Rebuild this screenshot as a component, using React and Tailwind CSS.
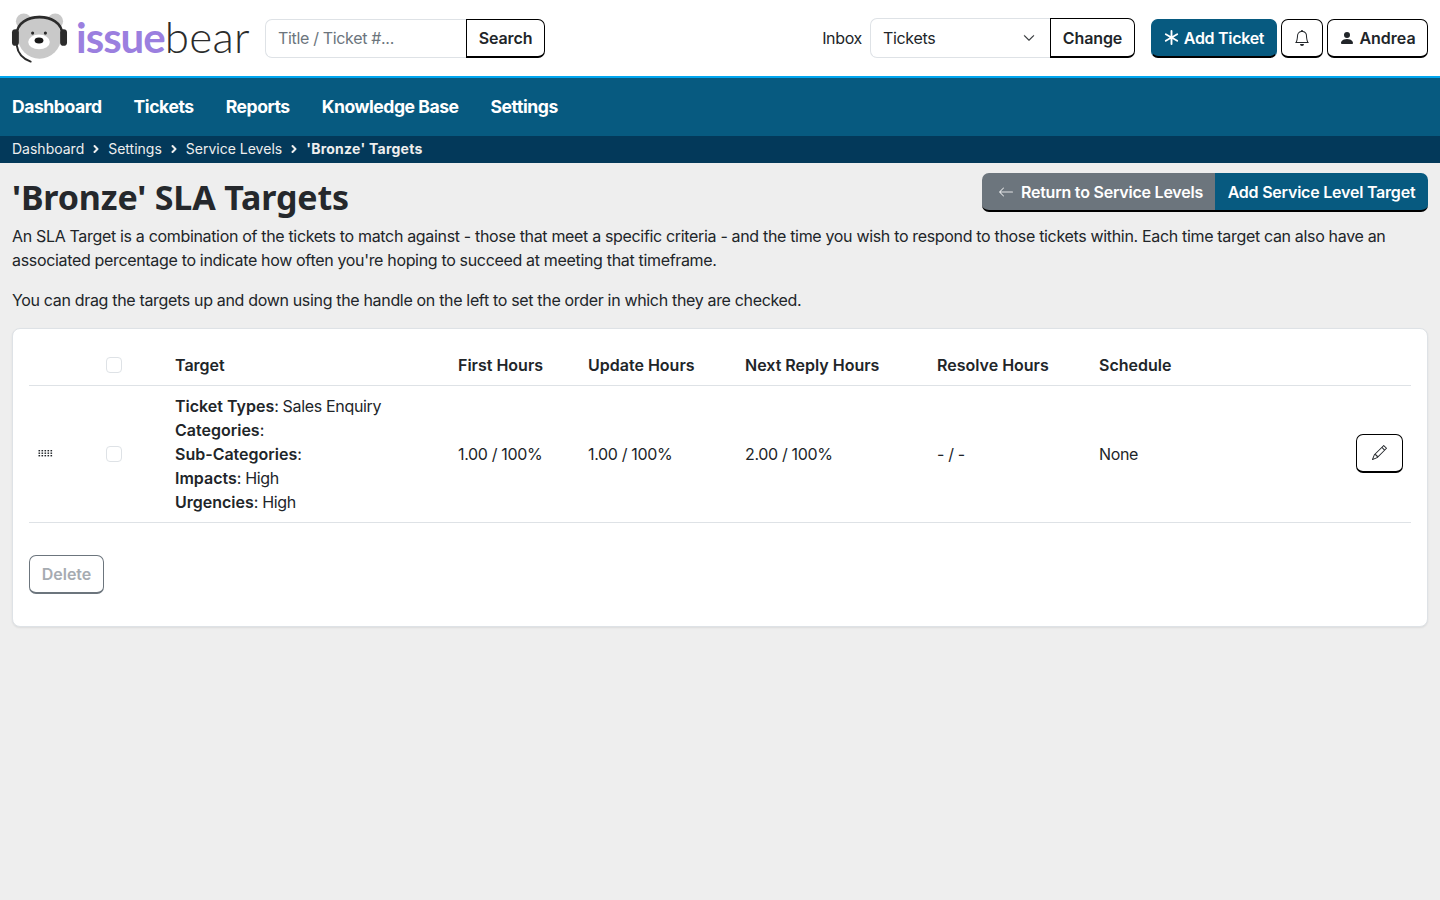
import { BsArrowLeft, BsAsterisk, BsBell, BsChevronDown, BsChevronRight, BsPencil, BsPersonFill } from 'react-icons/bs';

function BearLogo() {
  return (
    <svg width="57" height="52" viewBox="0 0 58 52" className="shrink-0 -ml-[1px]">
      <circle cx="13" cy="9" r="8" fill="#c9c9c9" />
      <circle cx="45" cy="9" r="8" fill="#c9c9c9" />
      <circle cx="29" cy="25" r="22" fill="#c9c9c9" />
      <path d="M6 22 C6 -1 52 -1 52 22" fill="none" stroke="#2b2b2b" strokeWidth="2.6" />
      <rect x="1" y="17" width="7" height="17" rx="3.5" fill="#2b2b2b" />
      <rect x="50" y="17" width="7" height="17" rx="3.5" fill="#2b2b2b" />
      <path d="M6 34 C7 42 12 47 20 50" fill="none" stroke="#2b2b2b" strokeWidth="2" strokeLinecap="round" />
      <ellipse cx="28.5" cy="30" rx="11" ry="7.5" fill="#fff" />
      <ellipse cx="28.5" cy="28.5" rx="4.5" ry="3" fill="#1a1a1a" />
      <circle cx="22" cy="21" r="1.6" fill="#2b2b2b" />
      <circle cx="35" cy="21" r="1.6" fill="#2b2b2b" />
    </svg>
  );
}

function GripDots() {
  const dots = [];
  for (let row = 0; row < 3; row++) {
    for (let col = 0; col < 5; col++) {
      dots.push(<rect key={`${row}-${col}`} x={col * 3} y={row * 2.5} width="1.6" height="1.4" fill="#212529" />);
    }
  }
  return (
    <svg width="15" height="7" viewBox="0 0 14 7" className="-mt-[1px] ml-[1px]">
      {dots}
    </svg>
  );
}

function Crumb({ children }) {
  return (
    <>
      <span>{children}</span>
      <BsChevronRight className="w-[8px] h-[8px] mx-[8px] stroke-[3px] stroke-current" />
    </>
  );
}

const outlineBtn = 'flex items-center justify-center bg-white border border-black border-b-2 rounded-[7px] text-[#212529] font-semibold tracking-normal';

export default function App() {
  return (
    <div className="min-h-[900px] bg-[#eeeeee] text-[#212529] text-[16px] leading-[24px] tracking-[-0.33px] font-['Inter',sans-serif]">
      {/* Top bar */}
      <header className="h-[78px] bg-white border-b-2 border-[#00a6f0] flex items-center px-[12px]">
        <div className="flex items-center w-[253px] shrink-0">
          <BearLogo />
          <span className="ml-[8px] text-[44px] leading-[52px] font-['Lato',sans-serif] font-light tracking-[0.3px] text-[#2b2b2b] -mt-[3px]">
            <span className="text-[42px] font-bold tracking-[-1px] text-[#9b7fdf]">issue</span>bear
          </span>
        </div>
        <div className="flex h-[39px]">
          <div className="w-[201px] bg-white border border-[#dee2e6] border-r-0 rounded-l-[7px] px-[12px] flex items-center text-[#6c757d]">
            Title / Ticket #...
          </div>
          <button className="w-[79px] bg-white border border-black border-b-2 rounded-r-[7px] font-semibold tracking-[-0.1px]">Search</button>
        </div>

        <div className="ml-auto flex items-center">
          <span className="mr-[8px]">Inbox</span>
          <div className="flex h-[40px]">
            <div className="w-[180px] bg-white border border-[#dee2e6] border-r-0 rounded-l-[7px] pl-[12px] pr-[15px] flex items-center justify-between">
              Tickets
              <BsChevronDown className="w-[12px] h-[12px] stroke-[0.6px] stroke-current" />
            </div>
            <button className="w-[85px] bg-white border border-black border-b-2 rounded-r-[7px] font-semibold tracking-[-0.1px]">Change</button>
          </div>
          <button className="ml-[16px] w-[126px] h-[39px] flex items-center justify-center bg-[#075a80] text-white border border-[#075a80] border-b-2 border-b-black rounded-[7px] font-semibold tracking-[-0.3px]">
            <BsAsterisk className="w-[15px] h-[15px] mr-[5px]" />
            Add Ticket
          </button>
          <button className={`${outlineBtn} ml-[4px] w-[42px] h-[39px]`}>
            <BsBell className="w-[16px] h-[16px]" />
          </button>
          <button className={`${outlineBtn} ml-[4px] w-[101px] h-[39px]`}>
            <BsPersonFill className="w-[16px] h-[16px] mr-[4px]" />
            Andrea
          </button>
        </div>
      </header>

      {/* Main nav */}
      <nav className="h-[58px] bg-[#075a80] flex items-center px-[12px] gap-[32px] text-white text-[17.6px] font-bold tracking-[-0.47px]">
        <span>Dashboard</span>
        <span>Tickets</span>
        <span>Reports</span>
        <span>Knowledge Base</span>
        <span>Settings</span>
      </nav>

      {/* Breadcrumb */}
      <div className="h-[27px] bg-[#03395a] flex items-center px-[12px] pb-[2px] text-[14px] tracking-normal text-[#eeeeee]">
        <Crumb>Dashboard</Crumb>
        <Crumb>Settings</Crumb>
        <Crumb>Service Levels</Crumb>
        <span className="font-bold tracking-[0.25px]">'Bronze' Targets</span>
      </div>

      <main className="px-[12px] pt-[10px]">
        <div className="flex justify-between h-[51px]">
          <h1 className="text-[34px] leading-[50px] font-bold font-['Noto_Sans',sans-serif] tracking-[-0.15px] text-[#25282c] -mt-[1px]">'Bronze' SLA Targets</h1>
          <div className="flex h-[39px] text-white font-semibold tracking-[-0.22px]">
            <button className="w-[233px] flex items-center justify-end pr-[12px] bg-[#6c757d] border-b-2 border-black rounded-l-[7px]">
              <BsArrowLeft className="w-[16px] h-[16px] mr-[7px] opacity-80" />
              Return to Service Levels
            </button>
            <button className="w-[213px] bg-[#075a80] border-b-2 border-black rounded-r-[7px]">Add Service Level Target</button>
          </div>
        </div>

        <p>
          An SLA Target is a combination of the tickets to match against - those that meet a specific criteria - and the time you wish to respond to those tickets within. Each time target can also have an associated percentage to indicate how often you're hoping to succeed at meeting that timeframe.
        </p>
        <p className="mt-[16px]">You can drag the targets up and down using the handle on the left to set the order in which they are checked.</p>

        <section className="mt-[16px] bg-white border border-[#dee2e6] rounded-[8px] shadow-[0_1px_2px_rgba(0,0,0,0.08)] p-[16px]">
          <table className="w-full table-fixed border-collapse">
            <colgroup>
              <col className="w-[69px]" />
              <col className="w-[69px]" />
              <col className="w-[283px]" />
              <col className="w-[130px]" />
              <col className="w-[157px]" />
              <col className="w-[192px]" />
              <col className="w-[162px]" />
              <col />
              <col className="w-[63px]" />
            </colgroup>
            <thead>
              <tr className="border-b border-[#dee2e6] text-left tracking-normal">
                <th className="p-[8px]"></th>
                <th className="p-[8px]">
                  <div className="w-[16px] h-[16px] border border-[#dee2e6] rounded-[4px] bg-white"></div>
                </th>
                <th className="p-[8px] font-semibold">Target</th>
                <th className="p-[8px] font-semibold">First Hours</th>
                <th className="p-[8px] font-semibold">Update Hours</th>
                <th className="p-[8px] font-semibold">Next Reply Hours</th>
                <th className="p-[8px] font-semibold">Resolve Hours</th>
                <th className="p-[8px] font-semibold">Schedule</th>
                <th className="p-[8px]"></th>
              </tr>
            </thead>
            <tbody>
              <tr className="border-b border-[#dee2e6]">
                <td className="p-[8px]">
                  <div className="flex"><GripDots /></div>
                </td>
                <td className="p-[8px]">
                  <div className="w-[16px] h-[16px] border border-[#dee2e6] rounded-[4px] bg-white"></div>
                </td>
                <td className="p-[8px] whitespace-nowrap">
                  <div><b className="font-semibold tracking-normal">Ticket Types</b>: Sales Enquiry</div>
                  <div><b className="font-semibold tracking-normal">Categories</b>:</div>
                  <div><b className="font-semibold tracking-normal">Sub-Categories</b>:</div>
                  <div><b className="font-semibold tracking-normal">Impacts</b>: High</div>
                  <div><b className="font-semibold tracking-normal">Urgencies</b>: High</div>
                </td>
                <td className="p-[8px]">1.00 / 100%</td>
                <td className="p-[8px]">1.00 / 100%</td>
                <td className="p-[8px]">2.00 / 100%</td>
                <td className="p-[8px]">- / -</td>
                <td className="p-[8px]">None</td>
                <td className="p-[8px]">
                  <button className={`${outlineBtn} w-[47px] h-[39px] -translate-y-[1px]`}>
                    <BsPencil className="w-[15px] h-[15px]" />
                  </button>
                </td>
              </tr>
            </tbody>
          </table>

          <button className="mt-[32px] mb-[16px] w-[75px] h-[39px] bg-white border border-[#6c757d] border-b-2 rounded-[7px] text-[#a6abb1] font-semibold tracking-normal">Delete</button>
        </section>
      </main>
    </div>
  );
}
